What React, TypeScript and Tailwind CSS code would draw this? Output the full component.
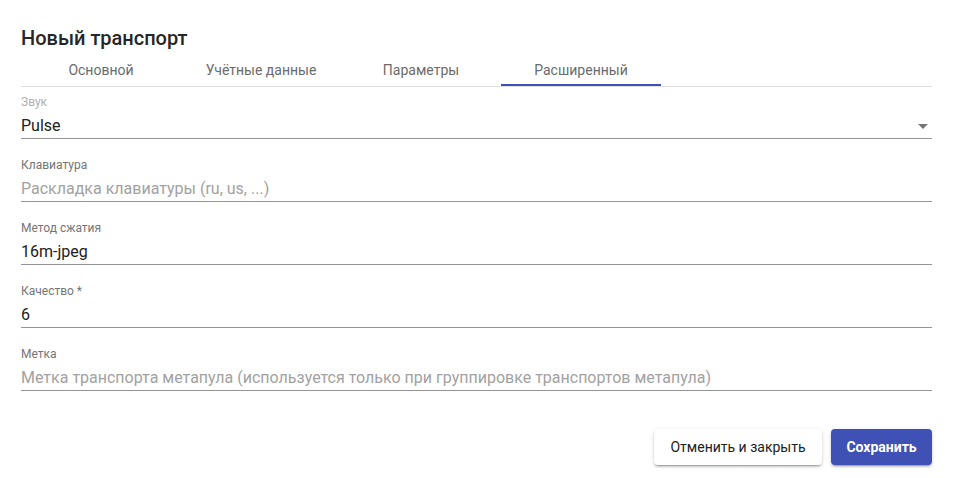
import React, { useState } from 'react';

const TABS = ['Основной', 'Учётные данные', 'Параметры', 'Расширенный'];

type FieldProps = {
  label: string;
  value?: string;
  placeholder?: string;
  select?: boolean;
  dimLabel?: boolean;
};

const Field: React.FC<FieldProps> = ({ label, value, placeholder, select, dimLabel }) => (
  <div className="flex flex-col border-b border-[#949494] pb-[2px]">
    <span className={`text-[12px] leading-[14px] ${dimLabel ? 'text-[#b0b0b0]' : 'text-[#757575]'}`}>{label}</span>
    <div className="mt-[7px] flex items-center justify-between">
      {value ? (
        <span className="text-[16px] leading-[20px] text-[#212121]">{value}</span>
      ) : (
        <span className="text-[16px] leading-[20px] text-[#a2a2a2]">{placeholder}</span>
      )}
      {select && (
        <svg width="10" height="5" viewBox="0 0 10 5" className="mr-[4px]">
          <path d="M0 0 L10 0 L5 5 Z" fill="#757575" />
        </svg>
      )}
    </div>
  </div>
);

export default function App() {
  const [active, setActive] = useState(3);

  return (
    <div className="min-h-screen bg-white pl-[21px] pr-[25px] pt-[22px] font-['Roboto',sans-serif]">
      <h1 className="text-[20px] font-medium leading-8 text-[#262626]">Новый транспорт</h1>

      {/* tab header */}
      <div className="flex h-[33px] border-b border-[#e0e0e0]">
        {TABS.map((t, i) => (
          <button
            key={t}
            onClick={() => setActive(i)}
            className="relative flex w-[160px] items-center justify-center text-[14px] text-[#6b6b6b]"
          >
            {t}
            {active === i && <span className="absolute bottom-0 left-0 h-[2px] w-full bg-[#3f51b5]" />}
          </button>
        ))}
      </div>

      <div className="mt-[8px] flex flex-col gap-[19px]">
        <Field label="Звук" value="Pulse" select dimLabel />
        <Field label="Клавиатура" placeholder="Раскладка клавиатуры (ru, us, ...)" />
        <Field label="Метод сжатия" value="16m-jpeg" />
        <Field label="Качество *" value="6" />
        <Field
          label="Метка"
          placeholder="Метка транспорта метапула (используется только при группировке транспортов метапула)"
        />
      </div>

      <div className="mt-[38px] flex justify-end gap-[9px]">
        <button className="h-[36px] w-[168px] rounded-[4px] bg-white text-[14px] text-[#212121] shadow-[0_3px_1px_-2px_rgba(0,0,0,0.2),0_2px_2px_0_rgba(0,0,0,0.14),0_1px_5px_0_rgba(0,0,0,0.12)]">
          Отменить и закрыть
        </button>
        <button className="h-[36px] w-[101px] rounded-[4px] bg-[#3f51b5] text-[14px] font-bold text-white shadow-[0_3px_1px_-2px_rgba(0,0,0,0.2),0_2px_2px_0_rgba(0,0,0,0.14),0_1px_5px_0_rgba(0,0,0,0.12)]">
          Сохранить
        </button>
      </div>
    </div>
  );
}
